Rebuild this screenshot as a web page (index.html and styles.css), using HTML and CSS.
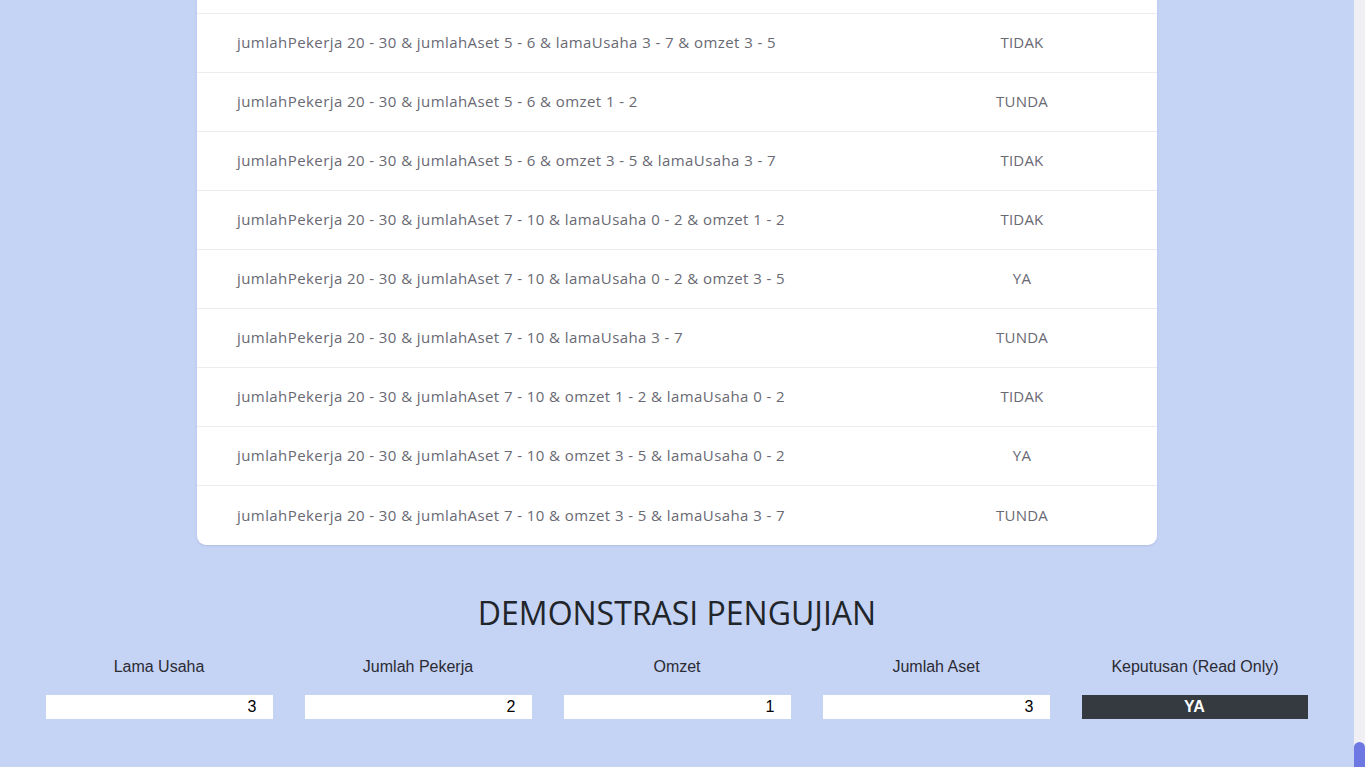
FILE: index.html
```html
<!DOCTYPE html>
<html lang="id">
<head>
<meta charset="utf-8">
<title>Demonstrasi Pengujian</title>
<link rel="stylesheet" href="styles.css">
</head>
<body>
<div class="page">
  <main class="main">
    <section class="card">
      <div class="row row-cut"></div>
      <div class="row"><div class="rule">jumlahPekerja 20 - 30 &amp; jumlahAset 5 - 6 &amp; lamaUsaha 3 - 7 &amp; omzet 3 - 5</div><div class="result">TIDAK</div></div>
      <div class="row"><div class="rule">jumlahPekerja 20 - 30 &amp; jumlahAset 5 - 6 &amp; omzet 1 - 2</div><div class="result">TUNDA</div></div>
      <div class="row"><div class="rule">jumlahPekerja 20 - 30 &amp; jumlahAset 5 - 6 &amp; omzet 3 - 5 &amp; lamaUsaha 3 - 7</div><div class="result">TIDAK</div></div>
      <div class="row"><div class="rule">jumlahPekerja 20 - 30 &amp; jumlahAset 7 - 10 &amp; lamaUsaha 0 - 2 &amp; omzet 1 - 2</div><div class="result">TIDAK</div></div>
      <div class="row"><div class="rule">jumlahPekerja 20 - 30 &amp; jumlahAset 7 - 10 &amp; lamaUsaha 0 - 2 &amp; omzet 3 - 5</div><div class="result">YA</div></div>
      <div class="row"><div class="rule">jumlahPekerja 20 - 30 &amp; jumlahAset 7 - 10 &amp; lamaUsaha 3 - 7</div><div class="result">TUNDA</div></div>
      <div class="row"><div class="rule">jumlahPekerja 20 - 30 &amp; jumlahAset 7 - 10 &amp; omzet 1 - 2 &amp; lamaUsaha 0 - 2</div><div class="result">TIDAK</div></div>
      <div class="row"><div class="rule">jumlahPekerja 20 - 30 &amp; jumlahAset 7 - 10 &amp; omzet 3 - 5 &amp; lamaUsaha 0 - 2</div><div class="result">YA</div></div>
      <div class="row row-last"><div class="rule">jumlahPekerja 20 - 30 &amp; jumlahAset 7 - 10 &amp; omzet 3 - 5 &amp; lamaUsaha 3 - 7</div><div class="result">TUNDA</div></div>
    </section>

    <section class="demo">
      <h2 class="demo-title">DEMONSTRASI PENGUJIAN</h2>
      <div class="fields">
        <div class="field"><label class="field-label">Lama Usaha</label><input class="field-input" type="text" value="3"></div>
        <div class="field"><label class="field-label">Jumlah Pekerja</label><input class="field-input" type="text" value="2"></div>
        <div class="field"><label class="field-label">Omzet</label><input class="field-input" type="text" value="1"></div>
        <div class="field"><label class="field-label">Jumlah Aset</label><input class="field-input" type="text" value="3"></div>
        <div class="field"><label class="field-label">Keputusan (Read Only)</label><div class="field-output">YA</div></div>
      </div>
    </section>
  </main>
  <div class="scrollbar"><div class="scroll-thumb"></div></div>
</div>
</body>
</html>
```

FILE: styles.css
```css
html, body {
  margin: 0;
  padding: 0;
  height: 767px;
  overflow: hidden;
}
body {
  background: #c5d3f5;
  font-family: "Open Sans", "Noto Sans", sans-serif;
}
.page {
  display: flex;
  height: 767px;
}
.main {
  flex: 1;
  display: flex;
  flex-direction: column;
  align-items: center;
}
.card {
  width: 960px;
  background: #ffffff;
  border-radius: 0 0 9px 9px;
  box-shadow: 0 1px 2px rgba(120, 130, 170, 0.25);
}
.row {
  display: grid;
  grid-template-columns: 1fr 270px;
  height: 58px;
  box-sizing: content-box;
  align-items: center;
  border-bottom: 1px solid #ececef;
  font-size: 15px;
  letter-spacing: 0.42px;
  color: #696973;
}
.row > div {
  padding-bottom: 2px;
}
.row-cut {
  height: 13px;
}
.row-last {
  border-bottom: none;
  height: 59px;
}
.rule {
  padding-left: 40px;
  white-space: nowrap;
}
.result {
  text-align: center;
  letter-spacing: 0.2px;
}
.demo {
  width: 100%;
  display: flex;
  flex-direction: column;
  align-items: center;
  padding-top: 47px;
}
.demo-title {
  margin: 0;
  font-family: "Open Sans", sans-serif;
  font-weight: 400;
  font-size: 32px;
  line-height: 42px;
  color: #212529;
}
.fields {
  display: grid;
  grid-template-columns: repeat(5, 259px);
  margin-top: 23px;
}
.field {
  display: flex;
  flex-direction: column;
  align-items: stretch;
  padding: 0 16px;
}
.field-label {
  font-family: "Liberation Sans", Arial, sans-serif;
  font-size: 16px;
  line-height: 20px;
  color: #2b2b33;
  text-align: center;
}
.field-input, .field-output {
  margin-top: 18px;
  height: 24px;
  box-sizing: border-box;
  border: none;
  outline: none;
  font-family: "Liberation Sans", Arial, sans-serif;
  font-size: 16px;
}
.field-input {
  background: #ffffff;
  color: #000000;
  text-align: right;
  padding: 0 16px 0 4px;
  width: 100%;
}
.field-output {
  background: #343a40;
  color: #ffffff;
  font-weight: 700;
  text-align: center;
  line-height: 24px;
  margin-right: 1px;
}
.scrollbar {
  width: 11px;
  background: #f0f0f4;
  display: flex;
  flex-direction: column;
  justify-content: flex-end;
}
.scroll-thumb {
  height: 25px;
  background: #6e78e2;
  border-radius: 6px 6px 0 0;
}
```
